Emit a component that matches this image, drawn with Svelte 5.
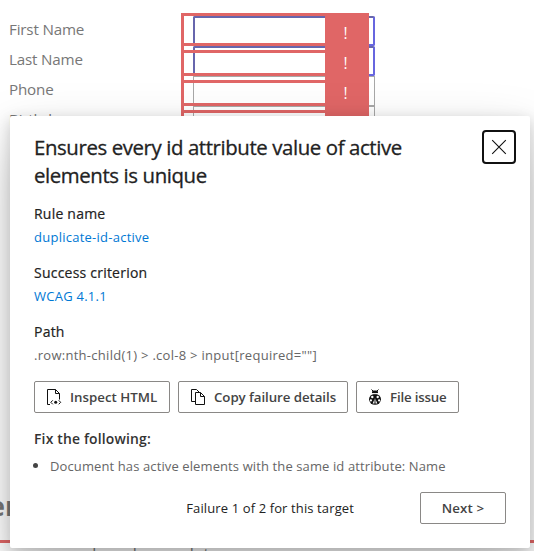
<script>
  const labels = ['First Name', 'Last Name', 'Phone', 'Birthday'];
</script>

<div class="page">
  <div class="form">
    {#each labels as label, i}
      <div class="row">
        <span class="label">{label}</span>
        <span class="input" class:required={i < 2}></span>
      </div>
    {/each}
  </div>
  <div class="marks">
    {#each labels as label}
      <div class="mark"><b>!</b></div>
    {/each}
  </div>
  <div class="lower">
    <div class="heading">er</div>
    <div class="rule"></div>
    <div class="below">send and my dot</div>
  </div>

  <section class="dialog">
    <header>
      <h1>Ensures every id attribute value of active<br />elements is unique</h1>
      <button class="close" aria-label="Close">
        <svg width="16" height="16" viewBox="0 0 16 16"><path d="M1.2 1.2 14.8 14.8M14.8 1.2 1.2 14.8" fill="none" stroke="#111" stroke-width="1.1" /></svg>
      </button>
    </header>
    <div class="field">
      <h2>Rule name</h2>
      <a href="#rule">duplicate-id-active</a>
    </div>
    <div class="field">
      <h2>Success criterion</h2>
      <a href="#wcag">WCAG 4.1.1</a>
    </div>
    <div class="field">
      <h2>Path</h2>
      <p class="path">.row:nth-child(1) &gt; .col-8 &gt; input[required=""]</p>
    </div>
    <div class="buttons">
      <button class="inspect">
        <svg width="16" height="18" viewBox="0 0 16 18" fill="none" stroke="#111"><path d="M4 16.5H1.500v-15h8l4 4v6M9.500 1.500v4h4" /><path d="M6.800 12.300 4.800 14.300l2 2M12.700 12.300l2 2-2 2" /><circle cx="9.700" cy="14.300" r="1.500" fill="#111" stroke="none" /></svg>
        <span>Inspect HTML</span>
      </button>
      <button class="copy">
        <svg width="16" height="18" viewBox="0 0 16 18" fill="none" stroke="#111"><path d="M5 13.500H1.500v-12h5l2.500 2.500M5.500 4.500h5l4 4v8h-9zM10.500 4.500v4h4" /></svg>
        <span>Copy failure details</span>
      </button>
      <button class="issue">
        <svg width="14" height="18" viewBox="0 0 14 18"><path d="M3.500 1.500 5 3M10.500 1.500 9 3" stroke="#111" /><path d="M4 5.200V4Q4 2.500 5.500 2.500h3Q10 2.500 10 4v1.200z" fill="#111" /><ellipse cx="7" cy="11.300" rx="6" ry="5.500" fill="#111" /><path d="M3 5.700h8" stroke="#fff" stroke-width=".9" /><g fill="#fff"><circle cx="4.300" cy="9" r="1.200" /><circle cx="9.700" cy="9" r="1.200" /><circle cx="2.900" cy="12.400" r="1.100" /><circle cx="11.100" cy="12.400" r="1.100" /><path d="m7 10 2.300 5.500H4.700z" /></g><path d="M7 7v9" stroke="#111" /></svg>
        <span>File issue</span>
      </button>
    </div>
    <h2 class="fix">Fix the following:</h2>
    <ul>
      <li>Document has active elements with the same id attribute: Name</li>
    </ul>
    <footer>
      <span class="count">Failure 1 of 2 for this target</span>
      <button class="next">Next &gt;</button>
    </footer>
  </section>
</div>

<style>
  :global(body) { margin: 0; background: #fff; }
  * { box-sizing: border-box; }
  .page {
    position: relative;
    width: 534px;
    height: 551px;
    overflow: hidden;
    background: #fff;
    font-family: 'Open Sans', 'Noto Sans', sans-serif;
    white-space: nowrap;
  }
  .form { padding-top: 16px; }
  .row { display: flex; height: 30px; padding-left: 9px; }
  .label { width: 184px; font-size: 15.2px; line-height: 26px; color: #777; letter-spacing: -.18px; }
  .input { width: 182px; height: 30px; border: 1px solid #a8a8a8; }
  .input.required { border: 2px solid; border-color: #6766ad #6766df #6766df #6766ad; border-radius: 2px; }
  .marks { position: absolute; left: 181px; top: 13px; width: 188px; border-left: 3px solid #e06666; }
  .mark { position: relative; height: 30px; }
  .mark:first-child { border-top: 3px solid #e06666; }
  .mark::before { content: ''; position: absolute; left: 0; right: 0; top: 30px; height: 3px; background: #e06666; }
  .mark:first-child::before { top: 27px; }
  .mark:not(:first-child)::after { content: ''; position: absolute; left: 0; right: 0; top: 7px; height: 3px; background: #e06666; }
  .mark b { position: absolute; z-index: 1; right: 0; top: 0; width: 44px; height: 33px; background: #e06666; color: #fff; font-weight: 400; font-size: 15.5px; line-height: 41px; text-align: center; padding-right: 3px; }
  .mark:first-child b { top: -3px; }
  .lower { position: absolute; left: 0; right: 0; top: 490px; }
  .heading { height: 50px; font-size: 27px; font-weight: 700; line-height: 32px; color: #777; margin-left: -11px; }
  .rule { height: 3px; background: #e06666; }
  .below { padding-left: 60px; font-size: 16px; line-height: 22px; word-spacing: 8px; color: #777; }

  .dialog {
    position: absolute;
    z-index: 2;
    left: 10px;
    top: 116px;
    width: 520px;
    height: 432px;
    padding: 14px 24px 24px;
    border-radius: 2px;
    background: #fff;
    box-shadow: 0 25.6px 57.6px rgba(0, 0, 0, .22), 0 4.8px 14.4px rgba(0, 0, 0, .18);
  }
  header { display: flex; justify-content: space-between; margin-right: -10px; height: 71px; }
  h1 { margin: 3px 0 0; font-size: 20.4px; font-weight: 500; line-height: 28px; color: #222; letter-spacing: -.4px; -webkit-text-stroke: .3px #222; }
  button { font: 600 13.3px 'Open Sans', 'Noto Sans', sans-serif; color: #444; background: #fff; border: 1px solid #8a8886; border-radius: 2px; height: 32px; padding: 0; display: flex; align-items: center; }
  .close { width: 34px; height: 34px; border: 2px solid #111; border-radius: 4px; justify-content: center; }
  .field { height: 59px; }
  h2 { margin: 0; height: 24px; font-size: 14px; line-height: 25px; font-weight: 500; color: #222; letter-spacing: .22px; -webkit-text-stroke: .2px #222; }
  a, p { display: block; margin: 0; font-size: 13px; line-height: 24px; color: #0078d4; letter-spacing: .25px; text-decoration: none; width: max-content; }
  p { color: #666; letter-spacing: .28px; }
  .buttons { display: flex; gap: 8px; padding-top: 3px; height: 48px; }
  .buttons button { gap: 8px; padding-left: 11px; }
  .inspect { width: 136px; }
  .copy { width: 170px; }
  .copy span { letter-spacing: -.07px; }
  .issue { width: 103px; }
  .issue span { letter-spacing: -.18px; }
  .fix { font-weight: 600; font-size: 13.9px; letter-spacing: .18px; color: #333; -webkit-text-stroke: 0; }
  ul { margin: 3px 0 0; padding: 0 0 0 16px; list-style: none; }
  li { position: relative; font-size: 13px; line-height: 26px; letter-spacing: .11px; color: #666; }
  li::before { content: ''; position: absolute; left: -17px; top: 10px; width: 5px; height: 5px; border-radius: 50%; background: #444; }
  footer { display: flex; align-items: center; justify-content: flex-end; gap: 66px; margin-top: 13px; }
  .count { font-size: 13px; letter-spacing: .12px; color: #222; }
  .next { width: 86px; justify-content: center; letter-spacing: .1px; }
</style>
